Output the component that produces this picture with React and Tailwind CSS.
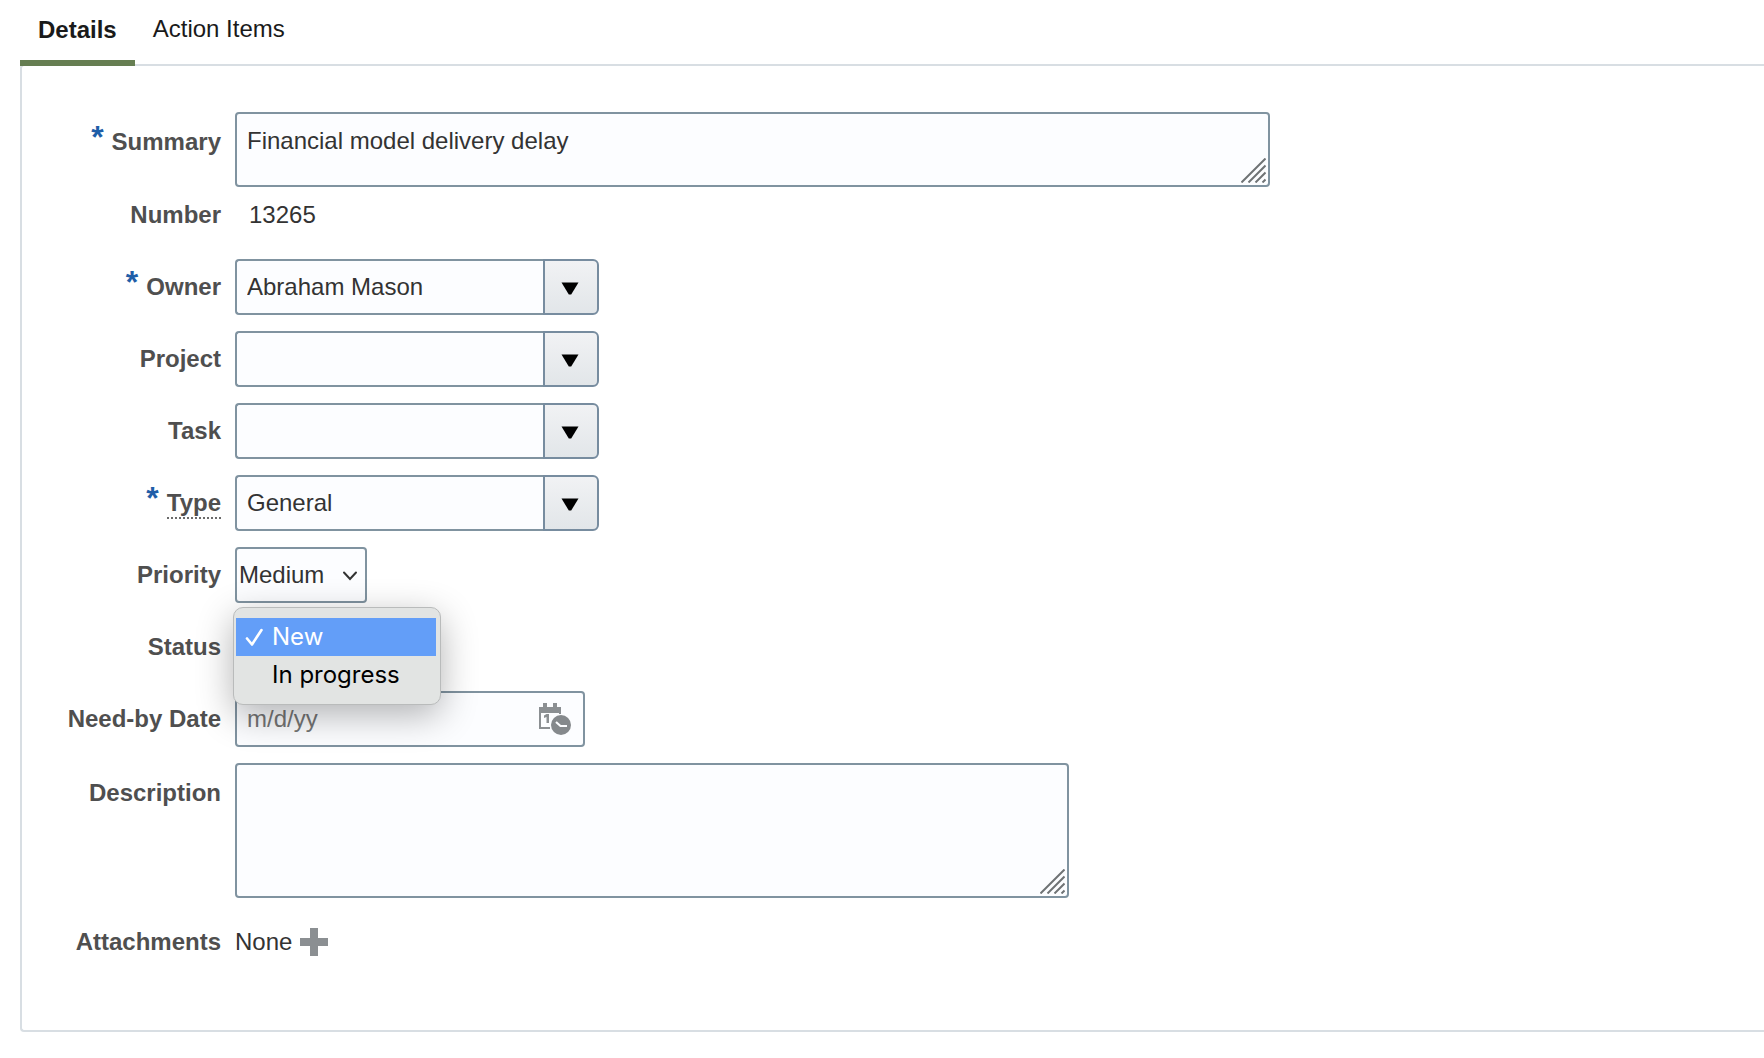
import { useState } from 'react'

const TABS = ['Details', 'Action Items']
const PRIORITY_OPTIONS = ['High', 'Medium', 'Low']
const STATUS_OPTIONS = ['New', 'In progress']

function FieldLabel({ id, text, required, tip, tall }) {
  return (
    <label
      htmlFor={id}
      className={
        tall
          ? 'flex items-start justify-end gap-2 pt-4 font-bold text-[#4f4f4f]'
          : 'flex items-start justify-end gap-2 pt-[14px] font-bold text-[#4f4f4f]'
      }
    >
      {required ? (
        <span className="text-[32px] leading-[18px] text-[#1f5ea8]" aria-hidden="true">
          *
        </span>
      ) : null}
      <span className={tip ? 'border-b-2 border-dotted border-[#6b6b6b]' : ''}>{text}</span>
    </label>
  )
}

function ResizeGrip() {
  return (
    <svg
      viewBox="0 0 25 25"
      className="pointer-events-none absolute right-1 bottom-1 h-[25px] w-[25px]"
      fill="none"
      stroke="#6f7375"
      strokeWidth="2"
      aria-hidden="true"
    >
      <path d="M0.5 24.5 24.5 0.5M7.5 24.5l17-17M14.5 24.5l10-10M21.5 24.5l3-3" />
    </svg>
  )
}

function LookupField({ id, value, onChange }) {
  return (
    <div className="flex h-14 w-[364px] max-w-full">
      <input
        id={id}
        type="text"
        value={value}
        onChange={(e) => onChange(e.target.value)}
        className="min-w-0 flex-1 rounded-l-[4px] border-2 border-r-0 border-[#8093a0] bg-[#fcfdff] px-[10px] outline-none"
      />
      <button
        type="button"
        aria-label={`Search ${id}`}
        className="flex w-14 items-center justify-center rounded-r-[6px] border-2 border-[#778c9f] bg-linear-to-b from-[#f1f2f4] to-[#e2e6e9] pt-[3px] pr-0.5"
      >
        <svg viewBox="0 0 18 13" className="h-[13px] w-[18px]" aria-hidden="true">
          <path d="M0.5 0.5h17L10.200 12.500H7.800z" fill="#000" />
        </svg>
      </button>
    </div>
  )
}

function CalendarClockIcon() {
  return (
    <svg viewBox="0 0 32 32" className="h-8 w-8" aria-hidden="true">
      <path d="M0 4h4V0h4v4h6V0h4v4h4v7h-2v-1H2v14h9v2H0z" fill="#8b8f92" />
      <path d="M5 12.500 7.500 11H10v9H7.500v-6L5 15z" fill="#8b8f92" />
      <circle cx="22" cy="22" r="10" fill="#85898c" />
      <path d="M17 19l4.500 4H28" fill="none" stroke="#fcfdff" strokeWidth="2.200" />
    </svg>
  )
}

function StatusMenu({ value, onSelect }) {
  return (
    <ul
      role="listbox"
      aria-label="Status"
      className="absolute -top-3 -left-0.5 z-10 w-[208px] rounded-[10px] border border-[#b9bbbb] bg-[#e2e4e3] px-0.5 py-[10px] font-['Inter',sans-serif] text-[24px] text-black shadow-[0_10px_36px_rgba(0,0,0,0.3)]"
    >
      {STATUS_OPTIONS.map((opt) => (
        <li
          key={opt}
          role="option"
          aria-selected={value === opt}
          onClick={() => onSelect(opt)}
          className="flex h-[38px] w-[200px] items-center pl-[9px] aria-selected:bg-[#639ef8] aria-selected:text-white"
        >
          <span className="w-[27px]">
            {value === opt ? (
              <svg
                viewBox="0 0 18 18"
                className="h-[18px] w-[18px]"
                fill="none"
                stroke="currentColor"
                strokeWidth="2.600"
                strokeLinecap="round"
                strokeLinejoin="round"
                aria-hidden="true"
              >
                <path d="M2 10.500 7 16.500 16.500 2" />
              </svg>
            ) : null}
          </span>
          {opt}
        </li>
      ))}
    </ul>
  )
}

export default function App() {
  const [tab, setTab] = useState('Details')
  const [form, setForm] = useState({
    summary: 'Financial model delivery delay',
    owner: 'Abraham Mason',
    project: '',
    task: '',
    type: 'General',
    priority: 'Medium',
    status: 'New',
    needBy: '',
    description: '',
  })

  const update = (key, val) => {
    setForm((prev) => ({ ...prev, [key]: val }))
  }

  return (
    <main className="overflow-hidden bg-white pl-5 font-['Liberation_Sans',Arial,sans-serif] text-[24px] leading-[28px] text-[#333333]">
      <div role="tablist" className="relative -mb-0.5 flex h-[66px]">
        {TABS.map((name) => (
          <button
            key={name}
            type="button"
            role="tab"
            aria-selected={tab === name}
            onClick={() => setTab(name)}
            className="flex items-start border-b-[6px] border-transparent px-[18px] pt-[15px] text-[#1a1a1a] aria-selected:border-[#667e52] aria-selected:pt-4 aria-selected:font-bold"
          >
            {name}
          </button>
        ))}
      </div>

      <form className="grid grid-cols-[199px_minmax(0,1fr)] gap-x-[14px] gap-y-4 rounded-l-[4px] border-2 border-r-0 border-[#d8dee3] pt-[46px] pb-[60px]">
        <FieldLabel id="summary" text="Summary" required tall />
        <div className="relative w-[1035px] max-w-full">
          <textarea
            id="summary"
            value={form.summary}
            onChange={(e) => update('summary', e.target.value)}
            className="block h-[75px] w-full resize-none rounded-[4px] border-2 border-[#8093a0] bg-[#fcfdff] px-[10px] pt-[13px] outline-none"
          />
          <ResizeGrip />
        </div>

        <span className="h-10 text-right leading-6 font-bold text-[#4f4f4f]">Number</span>
        <span className="h-10 pl-[14px] leading-6">13265</span>

        <FieldLabel id="owner" text="Owner" required />
        <LookupField id="owner" value={form.owner} onChange={(v) => update('owner', v)} />

        <FieldLabel id="project" text="Project" />
        <LookupField id="project" value={form.project} onChange={(v) => update('project', v)} />

        <FieldLabel id="task" text="Task" />
        <LookupField id="task" value={form.task} onChange={(v) => update('task', v)} />

        <FieldLabel id="type" text="Type" required tip />
        <LookupField id="type" value={form.type} onChange={(v) => update('type', v)} />

        <FieldLabel id="priority" text="Priority" />
        <div className="relative w-[132px]">
          <select
            id="priority"
            value={form.priority}
            onChange={(e) => update('priority', e.target.value)}
            className="h-14 w-full appearance-none rounded-[4px] border-2 border-[#8093a0] bg-[#fcfdff] pl-[2px] outline-none"
          >
            {PRIORITY_OPTIONS.map((opt) => (
              <option key={opt}>{opt}</option>
            ))}
          </select>
          <svg
            viewBox="0 0 16 10"
            className="pointer-events-none absolute top-6 right-[9px] h-[10px] w-4"
            fill="none"
            stroke="#333"
            strokeWidth="2"
            strokeLinecap="round"
            aria-hidden="true"
          >
            <path d="M2 1.500l6 6.500 6-6.500" />
          </svg>
        </div>

        <FieldLabel id="status" text="Status" />
        <div className="relative w-[132px]">
          <select
            id="status"
            value={form.status}
            onChange={(e) => update('status', e.target.value)}
            className="h-14 w-full appearance-none rounded-[4px] border-2 border-[#8093a0] bg-[#fcfdff] pl-[2px] outline-none"
          >
            {STATUS_OPTIONS.map((opt) => (
              <option key={opt}>{opt}</option>
            ))}
          </select>
          <StatusMenu value={form.status} onSelect={(v) => update('status', v)} />
        </div>

        <FieldLabel id="needBy" text="Need-by Date" />
        <div className="flex h-14 w-[350px] max-w-full items-center rounded-[4px] border-2 border-[#8093a0] bg-[#fcfdff] pr-3">
          <input
            id="needBy"
            type="text"
            placeholder="m/d/yy"
            value={form.needBy}
            onChange={(e) => update('needBy', e.target.value)}
            className="min-w-0 flex-1 bg-transparent pl-[10px] outline-none placeholder:text-[#757575]"
          />
          <button type="button" aria-label="Select date">
            <CalendarClockIcon />
          </button>
        </div>

        <FieldLabel id="description" text="Description" tall />
        <div className="relative w-[834px] max-w-full">
          <textarea
            id="description"
            value={form.description}
            onChange={(e) => update('description', e.target.value)}
            className="block h-[135px] w-full resize-none rounded-[4px] border-2 border-[#8093a0] bg-[#fcfdff] px-[10px] pt-[13px] outline-none"
          />
          <ResizeGrip />
        </div>

        <span className="pt-[14px] text-right font-bold text-[#4f4f4f]">Attachments</span>
        <div className="flex h-14 items-center gap-2">
          <span>None</span>
          <button type="button" aria-label="Add attachment">
            <svg viewBox="0 0 28 28" className="h-7 w-7" aria-hidden="true">
              <path d="M10 0h8v10h10v8H18v10h-8V18H0v-8h10z" fill="#8b8f92" />
            </svg>
          </button>
        </div>
      </form>
    </main>
  )
}
